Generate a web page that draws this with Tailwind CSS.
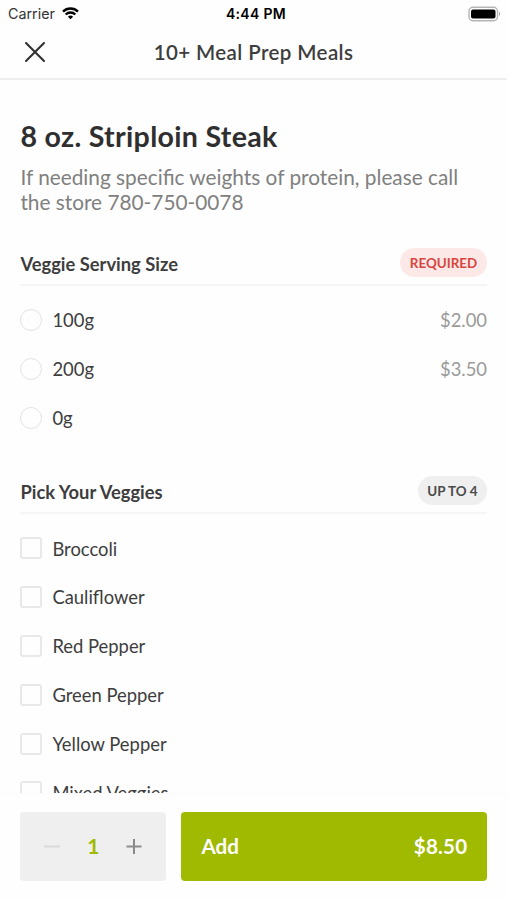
<!DOCTYPE html>
<html lang="en">
<head>
<meta charset="utf-8">
<title>10+ Meal Prep Meals</title>
<script src="https://cdn.jsdelivr.net/npm/@tailwindcss/browser@4"></script>
</head>
<body class="bg-white">
<div class="w-[507px] h-[900px] flex flex-col overflow-hidden bg-[#fefefe] font-['Lato',sans-serif] text-[#3d3d3d] whitespace-nowrap">
  <header class="h-[80px] shrink-0 border-b-2 border-[#efefef]">
    <div class="h-[27px] grid grid-cols-3 items-center pl-[8px] pr-[6px] font-['Inter',sans-serif] text-black">
      <div class="flex items-center gap-[7px]">
        <span class="text-[14.3px] text-[#333]">Carrier</span>
        <svg class="w-[17px] h-[13px]" viewBox="0 0 17 13" fill="none" stroke="#000" stroke-width="2.3"><path d="M1 4.6a10.6 10.6 0 0 1 15 0M3.7 7.5a6.8 6.8 0 0 1 9.6 0"/><path d="M8.5 12.3 5.9 9.7a3.7 3.7 0 0 1 5.2 0z" fill="#000" stroke="none"/></svg>
      </div>
      <span class="text-center text-[14px] font-semibold tracking-[0.3px] pl-[3px]">4:44 PM</span>
      <svg class="w-[33px] h-[16px] justify-self-end" viewBox="0 0 33 16"><rect x="1" y="1.2" width="28.5" height="13.6" rx="4" fill="#fff" stroke="#b5b5b5" stroke-width="1.4"/><rect x="3" y="3.4" width="24.5" height="9.2" rx="2" fill="#000"/><path d="M31 5.8q2 2.2 0 4.4z" fill="#999"/></svg>
    </div>
    <div class="h-[50px] grid grid-cols-[60px_1fr_60px] items-center">
      <svg class="w-[22px] h-[22px] ml-[24px]" viewBox="0 0 22 22" stroke="#303030" stroke-width="2.1" stroke-linecap="round"><path d="M2 2 20 20M20 2 2 20"/></svg>
      <h1 class="text-center text-[20.5px] font-semibold leading-[26px] tracking-[0.4px]">10+ Meal Prep Meals</h1>
    </div>
  </header>
  <main class="h-[713px] shrink-0 overflow-hidden pl-[20.4px] pr-[20px] pt-[36px]">
    <h2 class="h-[40px] leading-[40px] text-[28.6px] tracking-[0.3px] font-bold text-[#2f2f2f]">8 oz. Striploin Steak</h2>
    <p class="mt-[8px] text-[20.8px] leading-[25px] text-[#808080]">If needing specific weights of protein, please call<br>the store 780-750-0078</p>
    <section class="mt-[34px]">
      <div class="h-[38px] border-b-2 border-[#f5f5f5] flex items-start justify-between">
        <h3 class="leading-[32px] text-[18.35px] font-bold">Veggie Serving Size</h3>
        <span class="h-[29px] w-[87px] rounded-full bg-[#fde8e8] text-[#d8453f] text-[13.4px] leading-[30px] font-bold text-center">REQUIRED</span>
      </div>
      <ul class="pt-[9px] text-[18.4px]">
        <li class="h-[49px] flex items-center"><i class="size-[22px] rounded-full border-[1.5px] border-[#e3e3e3] mr-[10px]"></i><span class="pt-[2px]">100g</span><span class="ml-auto pt-[2px] text-[#9a9a9a]">$2.00</span></li>
        <li class="h-[49px] flex items-center"><i class="size-[22px] rounded-full border-[1.5px] border-[#e3e3e3] mr-[10px]"></i><span class="pt-[2px]">200g</span><span class="ml-auto pt-[2px] text-[#9a9a9a]">$3.50</span></li>
        <li class="h-[49px] flex items-center"><i class="size-[22px] rounded-full border-[1.5px] border-[#e3e3e3] mr-[10px]"></i><span class="pt-[2px]">0g</span></li>
      </ul>
    </section>
    <section class="mt-[34px]">
      <div class="h-[38px] border-b-2 border-[#f5f5f5] flex items-start justify-between">
        <h3 class="leading-[32px] text-[18.35px] font-bold">Pick Your Veggies</h3>
        <span class="h-[29px] w-[69px] rounded-full bg-[#efefef] text-[#4a4a4a] text-[13.4px] leading-[30px] font-bold text-center">UP TO 4</span>
      </div>
      <ul class="pt-[10px] text-[18.4px]">
        <li class="h-[48.8px] flex items-center"><i class="size-[22px] rounded-[3px] border-2 border-[#e8e8e8] mr-[10px]"></i><span class="pt-[2px]">Broccoli</span></li>
        <li class="h-[48.8px] flex items-center"><i class="size-[22px] rounded-[3px] border-2 border-[#e8e8e8] mr-[10px]"></i><span class="pt-[2px]">Cauliflower</span></li>
        <li class="h-[48.8px] flex items-center"><i class="size-[22px] rounded-[3px] border-2 border-[#e8e8e8] mr-[10px]"></i><span class="pt-[2px]">Red Pepper</span></li>
        <li class="h-[48.8px] flex items-center"><i class="size-[22px] rounded-[3px] border-2 border-[#e8e8e8] mr-[10px]"></i><span class="pt-[2px]">Green Pepper</span></li>
        <li class="h-[48.8px] flex items-center"><i class="size-[22px] rounded-[3px] border-2 border-[#e8e8e8] mr-[10px]"></i><span class="pt-[2px]">Yellow Pepper</span></li>
        <li class="h-[48.8px] flex items-center"><i class="size-[22px] rounded-[3px] border-2 border-[#e8e8e8] mr-[10px]"></i><span class="pt-[2px]">Mixed Veggies</span></li>
      </ul>
    </section>
  </main>
  <footer class="grow border-t border-[#fafafa] bg-[#fefefe] flex gap-[15px] pl-[20.4px] pr-[19.6px] pt-[18px]">
    <div class="w-[146px] h-[69px] rounded-[4px] bg-[#efefef] flex items-center justify-between px-[24px]">
      <svg class="size-[16px]" viewBox="0 0 16 16" stroke="#dadada" stroke-width="2"><path d="M0 7.5h16"/></svg>
      <span class="text-[21px] font-bold text-[#9fba00] pb-px">1</span>
      <svg class="size-[16px]" viewBox="0 0 16 16" stroke="#8b8b8b" stroke-width="2"><path d="M0.5 7.5h15M8 0v15"/></svg>
    </div>
    <button class="grow h-[69px] rounded-[4px] bg-[#9fba00] flex items-center justify-between px-[20px] pb-px text-white text-[20.6px] font-bold"><span>Add</span><span class="tracking-[0.2px]">$8.50</span></button>
  </footer>
</div>
</body>
</html>
